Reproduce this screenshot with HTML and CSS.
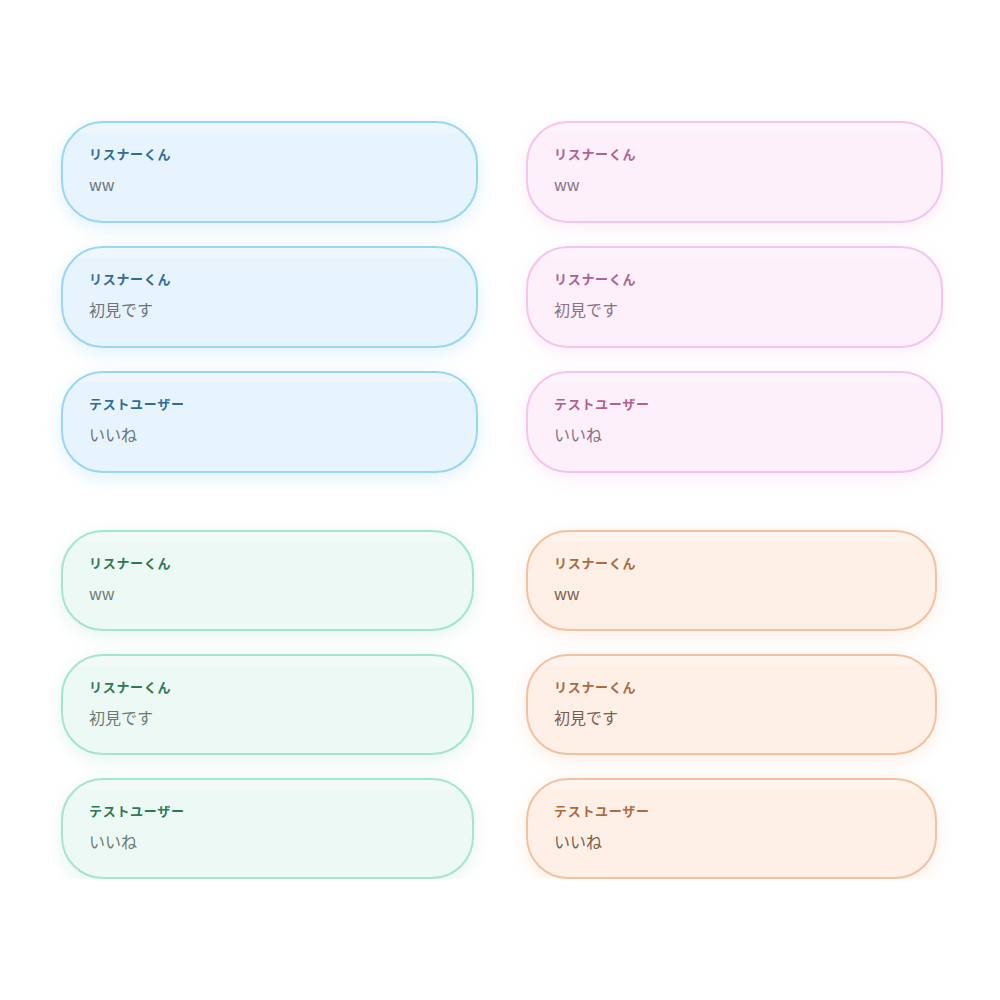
FILE: index.html
```html
<!DOCTYPE html>
<html lang="ja">
<head>
<meta charset="utf-8">
<link rel="stylesheet" href="styles.css">
</head>
<body>
<main class="board">
  <section class="group group--top">
    <div class="stack">
      <div class="bubble bubble--blue"><div class="name">リスナーくん</div><div class="msg">ww</div></div>
      <div class="bubble bubble--blue"><div class="name">リスナーくん</div><div class="msg">初見です</div></div>
      <div class="bubble bubble--blue"><div class="name">テストユーザー</div><div class="msg">いいね</div></div>
    </div>
    <div class="stack">
      <div class="bubble bubble--pink"><div class="name">リスナーくん</div><div class="msg">ww</div></div>
      <div class="bubble bubble--pink"><div class="name">リスナーくん</div><div class="msg">初見です</div></div>
      <div class="bubble bubble--pink"><div class="name">テストユーザー</div><div class="msg">いいね</div></div>
    </div>
  </section>
  <section class="group group--bottom">
    <div class="stack stack--green">
      <div class="bubble bubble--green"><div class="name">リスナーくん</div><div class="msg">ww</div></div>
      <div class="bubble bubble--green"><div class="name">リスナーくん</div><div class="msg">初見です</div></div>
      <div class="bubble bubble--green"><div class="name">テストユーザー</div><div class="msg">いいね</div></div>
    </div>
    <div class="stack stack--orange">
      <div class="bubble bubble--orange"><div class="name">リスナーくん</div><div class="msg">ww</div></div>
      <div class="bubble bubble--orange"><div class="name">リスナーくん</div><div class="msg">初見です</div></div>
      <div class="bubble bubble--orange"><div class="name">テストユーザー</div><div class="msg">いいね</div></div>
    </div>
  </section>
</main>
</body>
</html>
```
FILE: styles.css
```css
* { box-sizing: border-box; }
html, body {
  margin: 0;
  padding: 0;
  background: #ffffff;
  font-family: "Noto Sans CJK JP", "Noto Sans", sans-serif;
}
.board {
  padding: 121px 0 0 61px;
  display: flex;
  flex-direction: column;
  gap: 57px;
}
.group {
  display: grid;
  grid-template-columns: 417px 417px;
  column-gap: 48px;
  align-items: start;
}
.stack {
  display: flex;
  flex-direction: column;
  gap: 23px;
}
.stack--green { width: 413px; }
.stack--orange { width: 411px; }
.bubble {
  height: 102px;
  border: 2px solid;
  border-radius: 42px;
  padding: 22px 26px 0;
  background-image: linear-gradient(to bottom, rgba(255,255,255,0.3) 0, rgba(255,255,255,0.3) 8px, rgba(255,255,255,0) 11px);
}
.group--bottom .bubble { height: 101px; }
.name {
  font-size: 13px;
  line-height: 18px;
  font-weight: 700;
  letter-spacing: 0.7px;
}
.msg {
  margin-top: 9px;
  font-size: 16px;
  line-height: 24px;
}
.bubble--blue {
  border-color: #98d6f3;
  background-color: #e7f4fd;
  box-shadow: 0 5px 18px rgba(120, 190, 230, 0.22);
}
.bubble--blue .name { color: #2f6c9a; }
.bubble--blue .msg { color: #6a767f; }
.bubble--pink {
  border-color: #f6c4ea;
  background-color: #fdf0fa;
  box-shadow: 0 5px 18px rgba(235, 170, 220, 0.2);
}
.bubble--pink .name { color: #b0618f; }
.bubble--pink .msg { color: #8a7282; }
.bubble--green {
  border-color: #a2e6cd;
  background-color: #edf9f4;
  box-shadow: 0 5px 18px rgba(140, 210, 180, 0.22);
}
.bubble--green .name { color: #2b7a55; }
.bubble--green .msg { color: #6a7d74; }
.bubble--orange {
  border-color: #f4c09e;
  background-color: #fef0e6;
  box-shadow: 0 5px 18px rgba(240, 180, 140, 0.22);
}
.bubble--orange .name { color: #ad6a3c; }
.bubble--orange .msg { color: #7a5e4e; }
```
